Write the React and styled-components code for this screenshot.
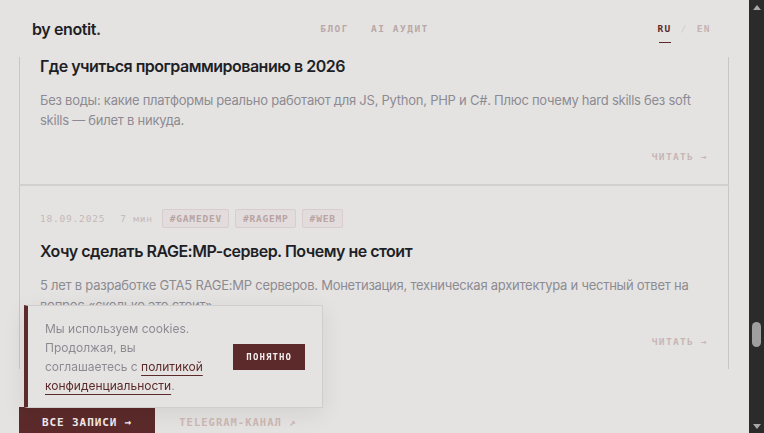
import React, { useLayoutEffect, useRef, useState } from "react";
import styled, { createGlobalStyle } from "styled-components";

const BG = "#e5e3e1";
const MAROON = "#5c2a2a";
const MONO = `"DejaVu Sans Mono", "Liberation Mono", monospace`;
const SANS = `Inter, "Noto Sans", sans-serif`;
const ARROW = 15;

const GlobalStyle = createGlobalStyle`
  html, body {
    margin: 0;
    height: 100%;
    overflow: hidden;
    background: ${BG};
  }
  body {
    color: #1e1f26;
    font-family: ${SANS};
  }
  * {
    box-sizing: border-box;
  }
`;

const Page = styled.div`
  display: flex;
  height: 100vh;
`;

const Scroller = styled.div`
  flex: 1;
  min-width: 0;
  overflow-y: scroll;
  scrollbar-width: none;
  background: ${BG};

  &::-webkit-scrollbar {
    display: none;
  }
`;

// dark classic scrollbar, as the browser draws it
const Bar = styled.aside`
  width: 15px;
  flex-shrink: 0;
  display: flex;
  flex-direction: column;
  background: #2b2b2b;
`;

const BarArrow = styled.div`
  height: ${ARROW}px;
  display: flex;
  align-items: center;
  justify-content: center;

  &::before {
    content: "";
    border-left: 4.5px solid transparent;
    border-right: 4.5px solid transparent;
    ${(p) => (p.$down ? "border-top" : "border-bottom")}: 5px solid #a8a8a8;
    margin-${(p) => (p.$down ? "top" : "bottom")}: 1px;
  }
`;

const BarTrack = styled.div`
  position: relative;
  flex: 1;
`;

const Thumb = styled.div`
  position: absolute;
  left: 3px;
  width: 9px;
  border-radius: 5px;
  background: #9f9f9f;
`;

const Header = styled.header`
  position: sticky;
  top: 0;
  z-index: 10;
  height: 57px;
  background: ${BG};
  display: grid;
  grid-template-columns: 1fr auto 1fr;
  align-items: center;
  padding: 0 35px;
`;

const Logo = styled.a`
  justify-self: start;
  margin: 1px 0 0 -3px;
  font-size: 16px;
  font-weight: 600;
  letter-spacing: -0.4px;
  color: #1e1f26;
  text-decoration: none;

  span {
    color: ${MAROON};
  }
`;

const Nav = styled.nav`
  display: flex;
  gap: 22px;
`;

const NavLink = styled.a`
  font-family: ${MONO};
  font-size: 9.5px;
  font-weight: 700;
  letter-spacing: 1.5px;
  color: #b9a8a8;
  text-decoration: none;
`;

const Lang = styled.div`
  justify-self: end;
  margin-right: 3px;
  display: flex;
  align-items: center;
  gap: 9px;
  font-family: ${MONO};
  font-size: 9.5px;
  font-weight: 700;
  letter-spacing: 1.4px;
  color: #c2b4b4;
`;

const LangItem = styled.a`
  position: relative;
  color: ${(p) => (p.$active ? MAROON : "#c2b4b4")};
  text-decoration: none;

  &::after {
    content: "";
    display: ${(p) => (p.$active ? "block" : "none")};
    position: absolute;
    left: 2px;
    right: 1px;
    bottom: -9px;
    height: 1px;
    background: ${MAROON};
  }
`;

const Slash = styled.span`
  color: #d4cbcb;
  font-weight: 400;
`;

const Main = styled.main`
  padding: 0 20px 0 19px;
`;

const Section = styled.section`
  min-height: ${(p) => p.$h}px;
  padding-top: 120px;
`;

const SectionTitle = styled.h2`
  margin: 0 0 0 13px;
  font-size: 28px;
  font-weight: 700;
  color: #1e1f26;
`;

const PostList = styled.div`
  display: flex;
  flex-direction: column;
`;

const Card = styled.article`
  border-left: 1px solid #c9c7c5;
  border-right: 1px solid #c9c7c5;
  border-top: 2px solid #d2d0ce;
  padding: 23px 20px 21px;
  display: flex;
  flex-direction: column;
`;

const Meta = styled.div`
  display: flex;
  align-items: center;
  gap: 6px;
  font-family: ${MONO};
  font-size: 9.5px;
  letter-spacing: 0.8px;
  color: #c4b8b8;
  margin-bottom: 11px;
`;

const MetaText = styled.span`
  margin-right: ${(p) => p.$gap}px;
`;

const Tag = styled.span`
  height: 19px;
  display: inline-flex;
  align-items: center;
  padding: 0 6px 0 7px;
  border: 1px solid #d8cccc;
  border-radius: 2px;
  background: #e2dddc;
  color: #b9a3a3;
  font-weight: 700;
  letter-spacing: 0.8px;
`;

const Title = styled.h3`
  margin: 0 0 12px;
  font-size: 16px;
  line-height: 24px;
  font-weight: 600;
  letter-spacing: -0.5px;
  color: #1e1f26;
`;

const Excerpt = styled.p`
  margin: 0 0 21px;
  font-size: 13px;
  line-height: 20px;
  letter-spacing: -0.25px;
  color: #8c8b93;
`;

const ReadLink = styled.a`
  align-self: flex-end;
  font-family: ${MONO};
  font-size: 9.5px;
  font-weight: 700;
  letter-spacing: 1.3px;
  line-height: 12px;
  color: #c6b6b6;
  text-decoration: none;
`;

const Actions = styled.div`
  display: flex;
  align-items: center;
  gap: 24px;
  margin-top: 38px;
`;

const PrimaryButton = styled.a`
  display: inline-flex;
  align-items: center;
  height: 30px;
  padding: 0 23px;
  background: ${MAROON};
  color: #f3ecec;
  font-family: ${MONO};
  font-size: 11px;
  font-weight: 700;
  letter-spacing: 0.9px;
  text-decoration: none;
`;

const GhostLink = styled.a`
  font-family: ${MONO};
  font-size: 10.5px;
  font-weight: 700;
  letter-spacing: 1px;
  color: #cdb8b4;
  text-decoration: none;
`;

const Footer = styled.footer`
  min-height: 1225px;
`;

const Cookie = styled.div`
  position: fixed;
  left: 24px;
  bottom: 25px;
  z-index: 20;
  width: 299px;
  display: flex;
  align-items: center;
  justify-content: space-between;
  padding: 13px 17px 12px 17px;
  background: ${BG};
  border: 1px solid #d0cecc;
  border-left: 4px solid ${MAROON};
  box-shadow: 0 6px 22px rgba(0, 0, 0, 0.08);
`;

const CookieText = styled.p`
  margin: 0;
  width: 165px;
  font-size: 12px;
  line-height: 19px;
  color: #8c8b93;

  a {
    color: ${MAROON};
    text-decoration: underline;
    text-underline-offset: 4px;
    text-decoration-thickness: 1px;
  }
`;

const CookieButton = styled.button`
  height: 26px;
  padding: 0 13px;
  border: 0;
  background: ${MAROON};
  color: #f3ecec;
  font-family: ${MONO};
  font-size: 9px;
  font-weight: 700;
  letter-spacing: 1.1px;
  cursor: pointer;
`;

const posts = [
  {
    date: "02.02.2026",
    time: "6 мин",
    tags: ["#CAREER", "#LEARNING"],
    title: "Где учиться программированию в 2026",
    excerpt:
      "Без воды: какие платформы реально работают для JS, Python, PHP и C#. Плюс почему hard skills без soft skills — билет в никуда.",
  },
  {
    date: "18.09.2025",
    time: "7 мин",
    tags: ["#GAMEDEV", "#RAGEMP", "#WEB"],
    title: "Хочу сделать RAGE:MP-сервер. Почему не стоит",
    excerpt:
      "5 лет в разработке GTA5 RAGE:MP серверов. Монетизация, техническая архитектура и честный ответ на вопрос «сколько это стоит».",
  },
];

const PostCard = React.forwardRef(({ post }, ref) => (
  <Card ref={ref}>
    <Meta>
      <MetaText $gap={9}>{post.date}</MetaText>
      <MetaText $gap={3}>{post.time}</MetaText>
      {post.tags.map((t) => (
        <Tag key={t}>{t}</Tag>
      ))}
    </Meta>
    <Title>{post.title}</Title>
    <Excerpt>{post.excerpt}</Excerpt>
    <ReadLink href="#">ЧИТАТЬ →</ReadLink>
  </Card>
));

export default function App() {
  const scrollerRef = useRef(null);
  const lastRef = useRef(null);
  const [thumb, setThumb] = useState({ top: 0, height: 25 });

  useLayoutEffect(() => {
    const box = scrollerRef.current;
    const el = lastRef.current;
    if (!box || !el) return;
    const offset =
      el.getBoundingClientRect().top - box.getBoundingClientRect().top;
    box.scrollTop = box.scrollTop + offset - 184;

    const track = box.clientHeight - ARROW * 2;
    const height = Math.max(18, (track * box.clientHeight) / box.scrollHeight);
    const range = box.scrollHeight - box.clientHeight;
    const top = range > 0 ? ((track - height) * box.scrollTop) / range : 0;
    setThumb({ top, height });
  }, []);

  return (
    <>
      <GlobalStyle />
      <Page>
        <Scroller ref={scrollerRef}>
          <Header>
            <Logo href="#">
              by enotit<span>.</span>
            </Logo>
            <Nav>
              <NavLink href="#">БЛОГ</NavLink>
              <NavLink href="#">AI АУДИТ</NavLink>
            </Nav>
            <Lang>
              <LangItem href="#" $active>
                RU
              </LangItem>
              <Slash>/</Slash>
              <LangItem href="#">EN</LangItem>
            </Lang>
          </Header>
          <Main>
            <Section $h={5258}>
              <SectionTitle>Блог</SectionTitle>
            </Section>
            <PostList>
              {posts.map((p, i) => (
                <PostCard
                  key={p.title}
                  post={p}
                  ref={i === posts.length - 1 ? lastRef : null}
                />
              ))}
            </PostList>
            <Actions>
              <PrimaryButton href="#">ВСЕ ЗАПИСИ →</PrimaryButton>
              <GhostLink href="#">TELEGRAM-КАНАЛ ↗</GhostLink>
            </Actions>
            <Footer />
          </Main>
        </Scroller>
        <Bar>
          <BarArrow />
          <BarTrack>
            <Thumb style={{ top: thumb.top, height: thumb.height }} />
          </BarTrack>
          <BarArrow $down />
        </Bar>
      </Page>
      <Cookie>
        <CookieText>
          Мы используем cookies. Продолжая, вы соглашаетесь с{" "}
          <a href="#">политикой конфиденциальности</a>.
        </CookieText>
        <CookieButton>ПОНЯТНО</CookieButton>
      </Cookie>
    </>
  );
}
